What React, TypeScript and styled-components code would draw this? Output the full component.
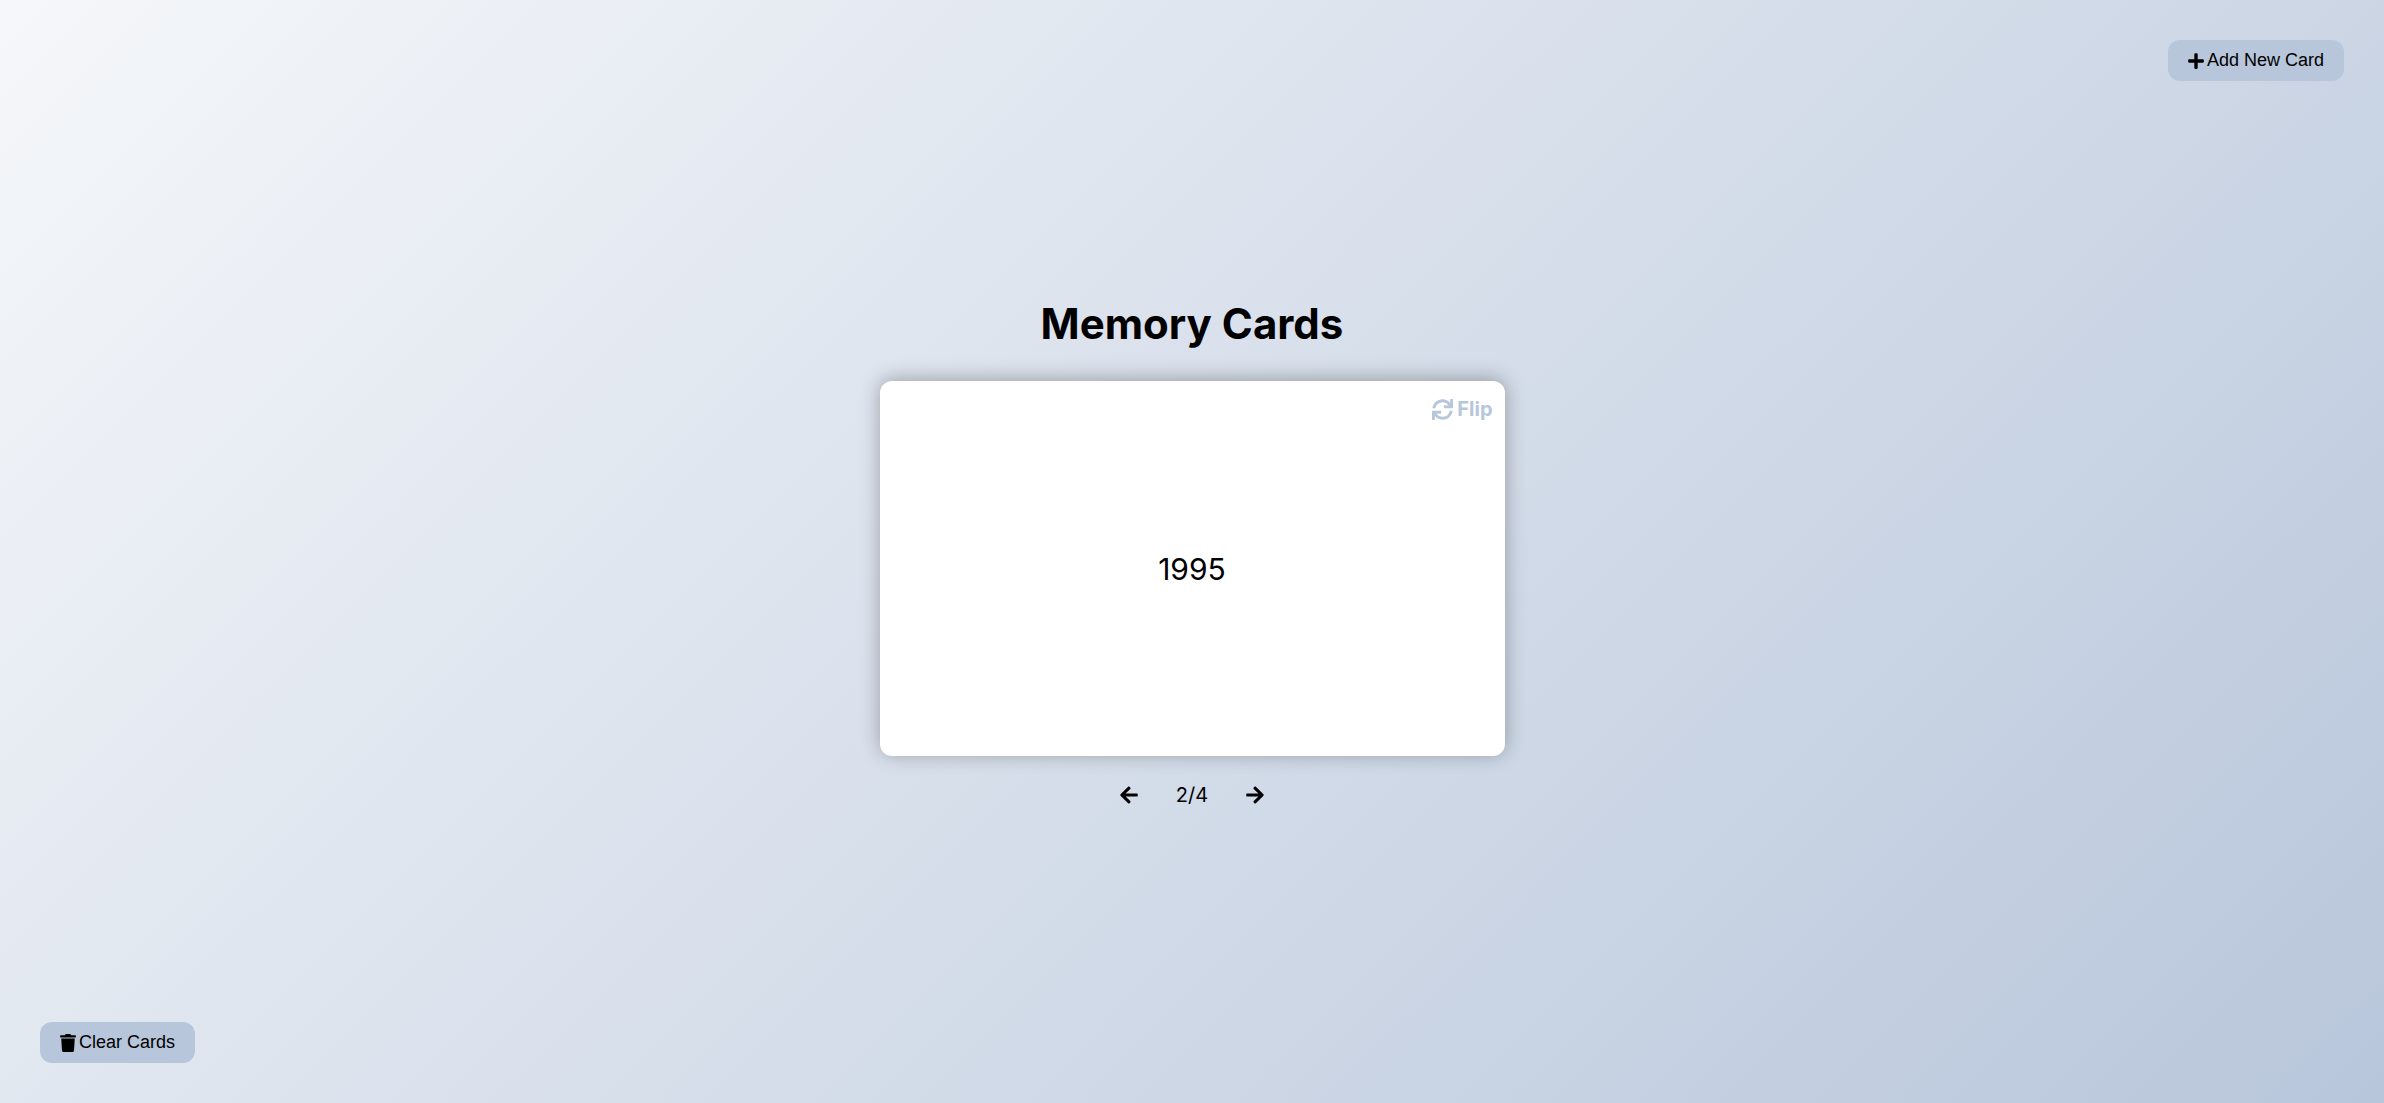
import React, { useState } from "react";
import styled, { createGlobalStyle } from "styled-components";
import { FaPlus, FaTrash, FaSync, FaArrowLeft, FaArrowRight } from "react-icons/fa";

const GlobalStyle = createGlobalStyle`
  * {
    box-sizing: border-box;
  }
  body {
    margin: 0;
    color: #000;
    font-family: Inter, "Open Sans", sans-serif;
  }
`;

const Page = styled.div`
  display: flex;
  flex-direction: column;
  justify-content: space-between;
  min-height: 100vh;
  padding: 40px;
  background: linear-gradient(135deg, #f5f7fa 0%, #b8c6db 100%);
`;

const Bar = styled.div<{ $align: "start" | "end" }>`
  display: flex;
  justify-content: flex-${(p) => p.$align};
`;

const ActionButton = styled.button`
  display: inline-flex;
  align-items: center;
  gap: 3px;
  padding: 10px 20px;
  border: 0;
  border-radius: 12px;
  background: #b8c6db;
  color: #000;
  font: 18px/21px "Liberation Sans", Arial, sans-serif;
  cursor: pointer;

  svg {
    width: 16px;
  }
`;

const Main = styled.main`
  display: flex;
  flex-direction: column;
  align-items: center;
`;

const Title = styled.h1`
  margin: 0 0 26px;
  font-size: 42px;
  font-weight: 700;
  line-height: 62px;
`;

const Card = styled.section`
  display: grid;
  grid-template-rows: 36px 1fr 36px;
  width: 100%;
  max-width: 625px;
  min-height: 375px;
  padding: 10px 12px;
  border-radius: 12px;
  background: #fff;
  box-shadow: 0 -2px 20px rgba(0, 0, 0, 0.3);
`;

const FlipButton = styled.button`
  display: flex;
  justify-self: end;
  align-items: center;
  gap: 4px;
  padding: 0;
  border: 0;
  background: none;
  color: #b8c6db;
  font: 700 20px/36px Inter, "Open Sans", sans-serif;
  cursor: pointer;

  svg {
    width: 21px;
    height: 21px;
  }
`;

const Question = styled.p`
  align-self: center;
  margin: 0;
  text-align: center;
  font-size: 30px;
  line-height: 48px;
`;

const Navigation = styled.nav`
  display: flex;
  align-items: center;
  justify-content: center;
  gap: 36px;
  margin-top: 24px;
  font-size: 20px;
  line-height: 30px;
`;

const ArrowButton = styled.button`
  display: flex;
  padding: 0;
  border: 0;
  background: none;
  color: #000;
  font-size: 20px;
  cursor: pointer;
`;

const Counter = styled.span`
  min-width: 34px;
  text-align: center;
`;

const TOTAL = 4;

export default function App() {
  const [index, setIndex] = useState(2);
  return (
    <>
      <GlobalStyle />
      <Page>
        <Bar $align="end">
          <ActionButton type="button">
            <FaPlus />
            Add New Card
          </ActionButton>
        </Bar>
        <Main>
          <Title>Memory Cards</Title>
          <Card>
            <FlipButton type="button">
              <FaSync />
              Flip
            </FlipButton>
            <Question>1995</Question>
          </Card>
          <Navigation aria-label="Cards">
            <ArrowButton type="button" aria-label="Previous card" onClick={() => setIndex(Math.max(1, index - 1))}>
              <FaArrowLeft />
            </ArrowButton>
            <Counter>{`${index}/${TOTAL}`}</Counter>
            <ArrowButton type="button" aria-label="Next card" onClick={() => setIndex(Math.min(TOTAL, index + 1))}>
              <FaArrowRight />
            </ArrowButton>
          </Navigation>
        </Main>
        <Bar $align="start">
          <ActionButton type="button">
            <FaTrash />
            Clear Cards
          </ActionButton>
        </Bar>
      </Page>
    </>
  );
}
